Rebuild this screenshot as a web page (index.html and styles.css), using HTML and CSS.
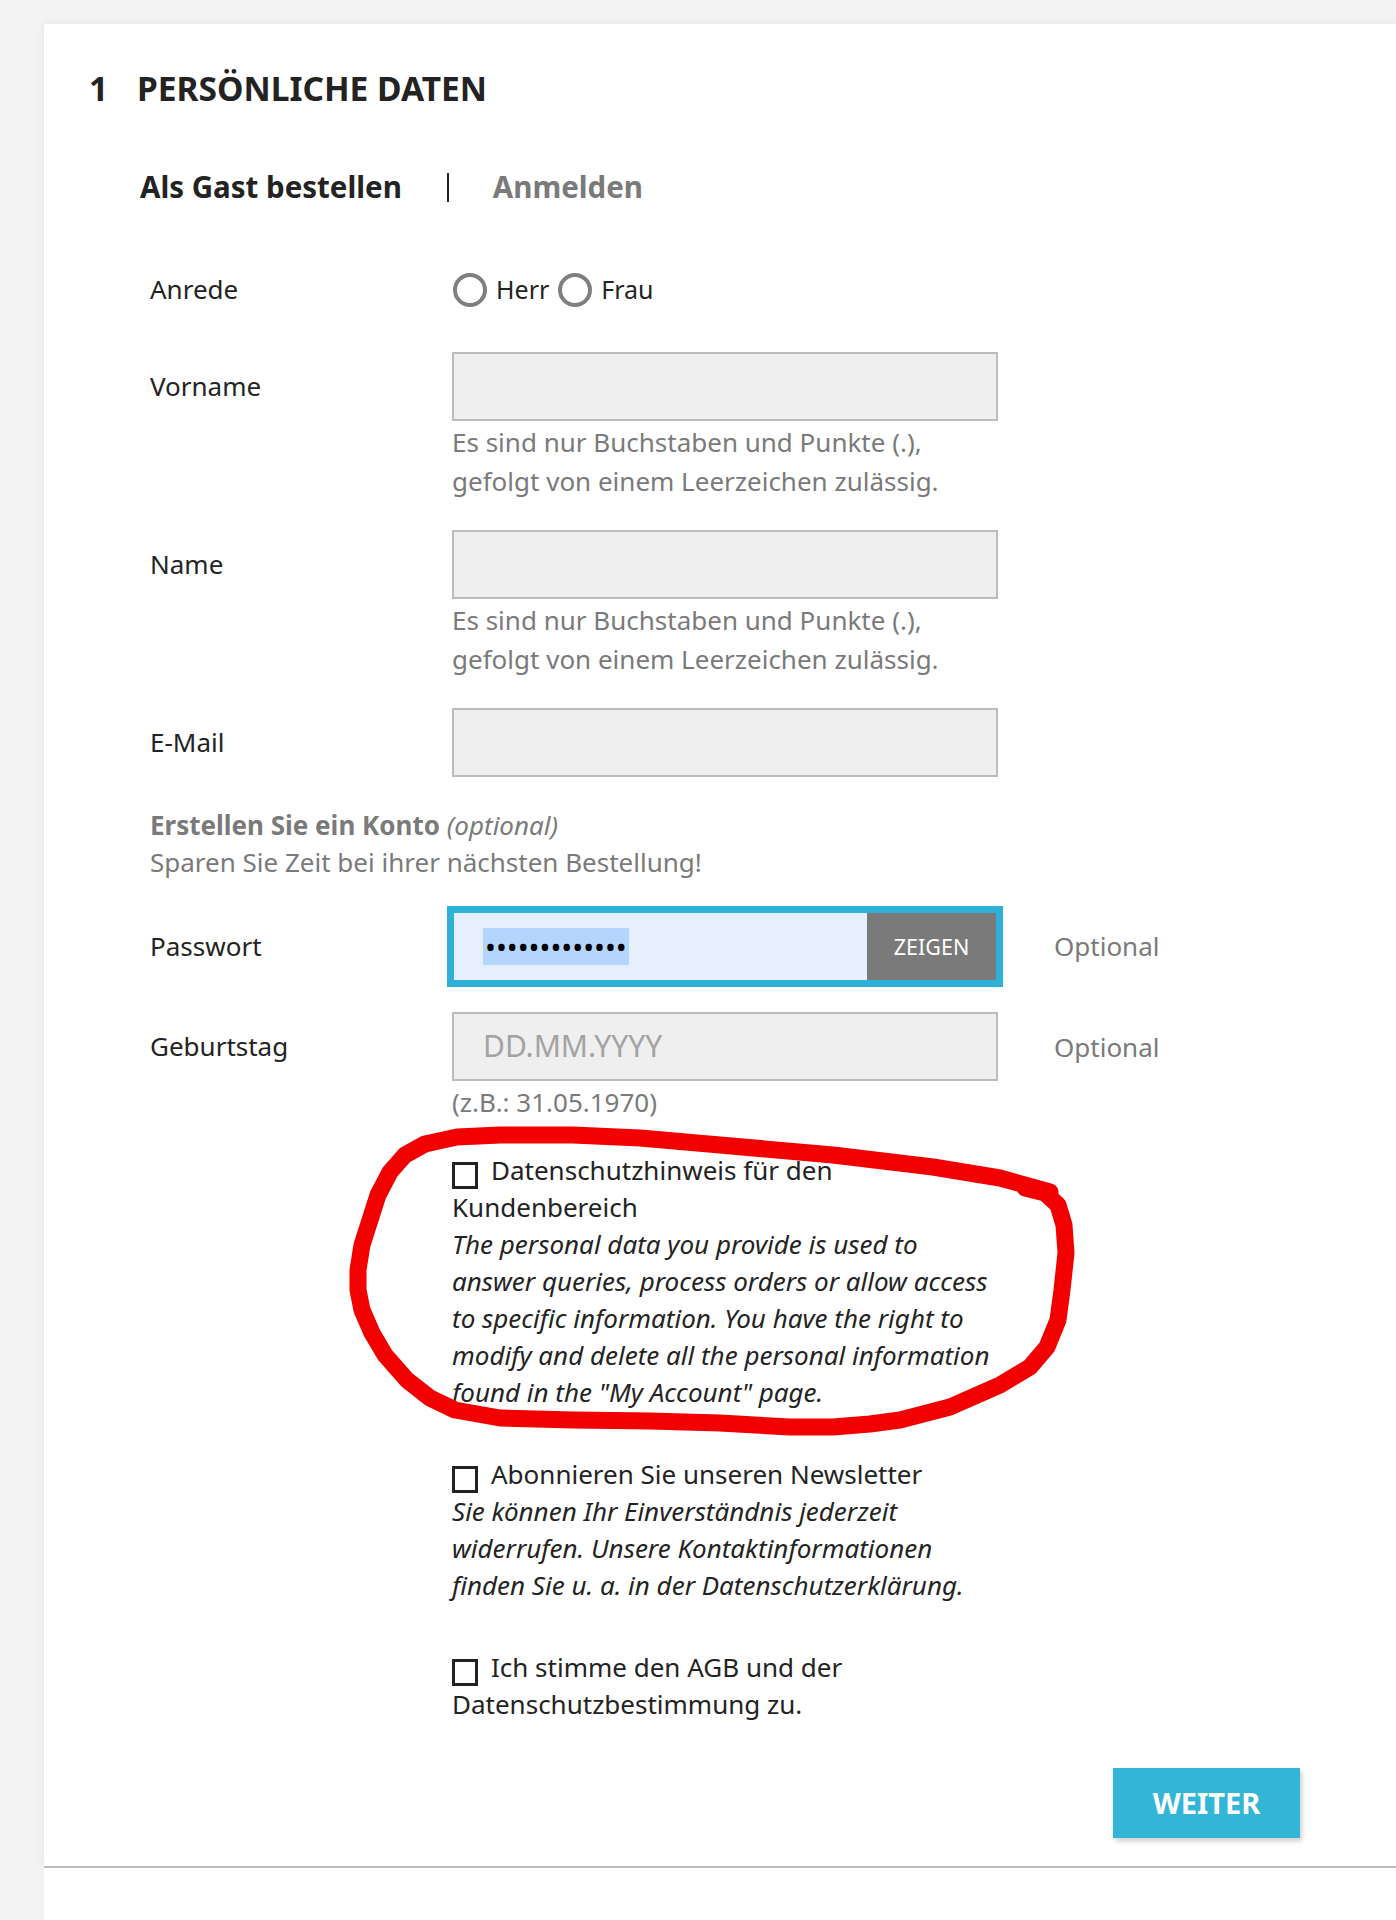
FILE: index.html
```html
<!DOCTYPE html>
<html lang="de">
<head>
    <meta charset="UTF-8">
    <meta name="viewport" content="width=device-width, initial-scale=1.0">
    <title>Persönliche Daten</title>
    <link rel="stylesheet" href="styles.css">
</head>
<body>
    <div class="page">
        <section class="checkout-step">
            <h1 class="step-title"><span class="step-number">1</span>PERSÖNLICHE DATEN</h1>

            <div class="step-nav">
                <span class="step-nav-item active">Als Gast bestellen</span>
                <span class="step-nav-sep"></span>
                <span class="step-nav-item">Anmelden</span>
            </div>

            <form class="customer-form">
                <div class="form-row row-gender">
                    <label class="form-label">Anrede</label>
                    <div class="radio-group">
                        <label class="radio-option"><span class="radio"></span>Herr</label>
                        <label class="radio-option"><span class="radio"></span>Frau</label>
                    </div>
                </div>

                <div class="form-row">
                    <label class="form-label">Vorname</label>
                    <div class="form-field">
                        <input class="form-control" type="text">
                        <p class="form-help">Es sind nur Buchstaben und Punkte (.),<br>gefolgt von einem Leerzeichen zulässig.</p>
                    </div>
                </div>

                <div class="form-row">
                    <label class="form-label">Name</label>
                    <div class="form-field">
                        <input class="form-control" type="text">
                        <p class="form-help">Es sind nur Buchstaben und Punkte (.),<br>gefolgt von einem Leerzeichen zulässig.</p>
                    </div>
                </div>

                <div class="form-row">
                    <label class="form-label">E-Mail</label>
                    <div class="form-field">
                        <input class="form-control" type="email">
                    </div>
                </div>

                <div class="account-intro">
                    <p><strong>Erstellen Sie ein Konto</strong> <em>(optional)</em></p>
                    <p>Sparen Sie Zeit bei ihrer nächsten Bestellung!</p>
                </div>

                <div class="form-row row-password">
                    <label class="form-label">Passwort</label>
                    <div class="form-field">
                        <div class="password-group">
                            <div class="password-input"><span class="password-dots">•••••••••••••</span></div>
                            <button type="button" class="password-toggle">ZEIGEN</button>
                        </div>
                    </div>
                    <span class="form-optional">Optional</span>
                </div>

                <div class="form-row">
                    <label class="form-label">Geburtstag</label>
                    <div class="form-field">
                        <input class="form-control date-control" type="text" placeholder="DD.MM.YYYY">
                        <p class="form-help">(z.B.: 31.05.1970)</p>
                    </div>
                    <span class="form-optional">Optional</span>
                </div>

                <div class="consents">
                    <div class="consent">
                        <label><span class="checkbox"></span>Datenschutzhinweis für den<br>Kundenbereich</label>
                        <em>The personal data you provide is used to<br>answer queries, process orders or allow access<br>to specific information. You have the right to<br>modify and delete all the personal information<br>found in the "My Account" page.</em>
                    </div>
                    <div class="consent">
                        <label><span class="checkbox"></span>Abonnieren Sie unseren Newsletter</label>
                        <em>Sie können Ihr Einverständnis jederzeit<br>widerrufen. Unsere Kontaktinformationen<br>finden Sie u. a. in der Datenschutzerklärung.</em>
                    </div>
                    <div class="consent">
                        <label><span class="checkbox"></span>Ich stimme den AGB und der<br>Datenschutzbestimmung zu.</label>
                    </div>
                </div>

                <div class="form-footer">
                    <button type="button" class="btn-continue">WEITER</button>
                </div>
            </form>
        </section>

        <div class="next-step"></div>

        <!-- red hand drawn mark over the privacy notice -->
        <svg class="annotation" width="1396" height="1920" viewBox="0 0 1396 1920">
            <path d="M1050 1192 L1000 1178 L933 1167 L833 1155 L720 1145 L640 1138 L573 1135 L500 1135 L457 1137 L425 1144 L405 1155 L390 1172 L378 1195 L370 1220 L362 1245 L358 1270 L358 1290 L362 1310 L372 1333 L385 1355 L407 1380 L430 1398 L455 1410 L500 1418 L573 1420 L650 1421 L720 1423 L790 1427 L833 1427 L870 1424 L900 1420 L950 1407 L1000 1385 L1030 1367 L1047 1347 L1058 1320 L1062 1290 L1066 1253 L1064 1225 L1058 1205 L1045 1193 L1025 1188"
                  fill="none" stroke="#f20000" stroke-width="17" stroke-linecap="round" stroke-linejoin="round"/>
        </svg>
    </div>
</body>
</html>
```

FILE: styles.css
```css
body {
    margin: 0;
    background-color: #f3f3f3;
    font-family: "Noto Sans", "Open Sans", sans-serif;
    font-size: 26px;
    color: #232323;
}

.page {
    position: relative;
    height: 1920px;
    overflow: hidden;
}

.checkout-step {
    margin: 24px 0 0 44px;
    padding: 44px 96px 28px 45px;
    background: white;
    box-shadow: 0 0 8px rgba(0,0,0,0.08);
}

.step-title {
    margin: 0;
    font-size: 33.5px;
    line-height: 40px;
    font-weight: 700;
    color: #232323;
}

.step-number {
    display: inline-block;
    width: 48px;
}

.step-nav {
    display: flex;
    align-items: center;
    margin: 59px 0 0 51px;
    font-size: 29.5px;
    line-height: 40px;
    font-weight: 700;
}

.step-nav-item {
    color: #7a7a7a;
}

.step-nav-item.active {
    color: #232323;
}

.step-nav-sep {
    width: 2px;
    height: 29px;
    margin: 0 44px 0 45px;
    background: #232323;
}

.customer-form {
    margin: 62px 0 0 61px;
}

.form-row {
    display: grid;
    grid-template-columns: 302px 546px auto;
    align-items: start;
    margin-bottom: 30px;
}

.form-label {
    line-height: 69px;
}

.form-optional {
    margin-left: 56px;
    line-height: 71px;
    color: #7a7a7a;
}

.row-gender {
    align-items: center;
    margin-bottom: 43px;
}

.row-gender .form-label {
    line-height: 40px;
}

.radio-group {
    display: flex;
    align-items: center;
    font-size: 25px;
}

.radio-option {
    display: flex;
    align-items: center;
    line-height: 40px;
    margin-right: 8px;
}

.radio {
    width: 34px;
    height: 34px;
    box-sizing: border-box;
    border: 4px solid #7f7f7f;
    border-radius: 50%;
    margin: 1px 9px 0 1px;
}

.form-control {
    display: block;
    width: 546px;
    height: 69px;
    box-sizing: border-box;
    margin: 0;
    border: 2px solid #bcbcbc;
    background: #efefef;
    font-family: inherit;
    font-size: 26px;
    padding: 0 29px;
    outline: none;
}

.date-control::placeholder {
    color: #a3a3a3;
    font-size: 30px;
}

.form-help {
    margin: 2px 0 0;
    line-height: 38.5px;
    color: #7a7a7a;
}

.account-intro {
    margin-bottom: 30px;
    color: #7a7a7a;
    line-height: 37px;
}

.account-intro p {
    margin: 0;
}

.row-password .form-label {
    line-height: 71px;
}

.password-group {
    display: flex;
    height: 71px;
    box-sizing: border-box;
    border: 2px solid #2eb1d6;
    box-shadow: 0 0 0 5px #2eb1d6;
    background: #e6f0fc;
}

.password-input {
    flex: 1;
    display: flex;
    align-items: center;
    padding-left: 29px;
}

.password-dots {
    background: #b4d5fd;
    color: #000;
    font-size: 29px;
    line-height: 37px;
    padding: 0 2px;
}

.password-toggle {
    width: 129px;
    border: none;
    background: #7a7a7a;
    color: white;
    font-family: inherit;
    font-size: 21.5px;
    padding: 0;
}

.consents {
    margin-left: 302px;
    width: 560px;
    line-height: 37px;
}

.consent {
    margin-bottom: 45px;
}

.consent label {
    display: block;
}

.consent em {
    display: block;
}

.checkbox {
    display: inline-block;
    width: 26px;
    height: 27px;
    box-sizing: border-box;
    border: 3px solid #232323;
    vertical-align: -9px;
    margin-right: 13px;
}

.form-footer {
    display: flex;
    justify-content: flex-end;
}

.btn-continue {
    width: 187px;
    height: 70px;
    border: none;
    background: #33b5d6;
    color: white;
    font-family: inherit;
    font-size: 29px;
    font-weight: 700;
    box-shadow: 2px 3px 5px rgba(0,0,0,0.2);
}

.next-step {
    margin-left: 44px;
    height: 60px;
    border-top: 2px solid #bdbdbd;
    background: white;
}

.annotation {
    position: absolute;
    top: 0;
    left: 0;
    pointer-events: none;
}
```
